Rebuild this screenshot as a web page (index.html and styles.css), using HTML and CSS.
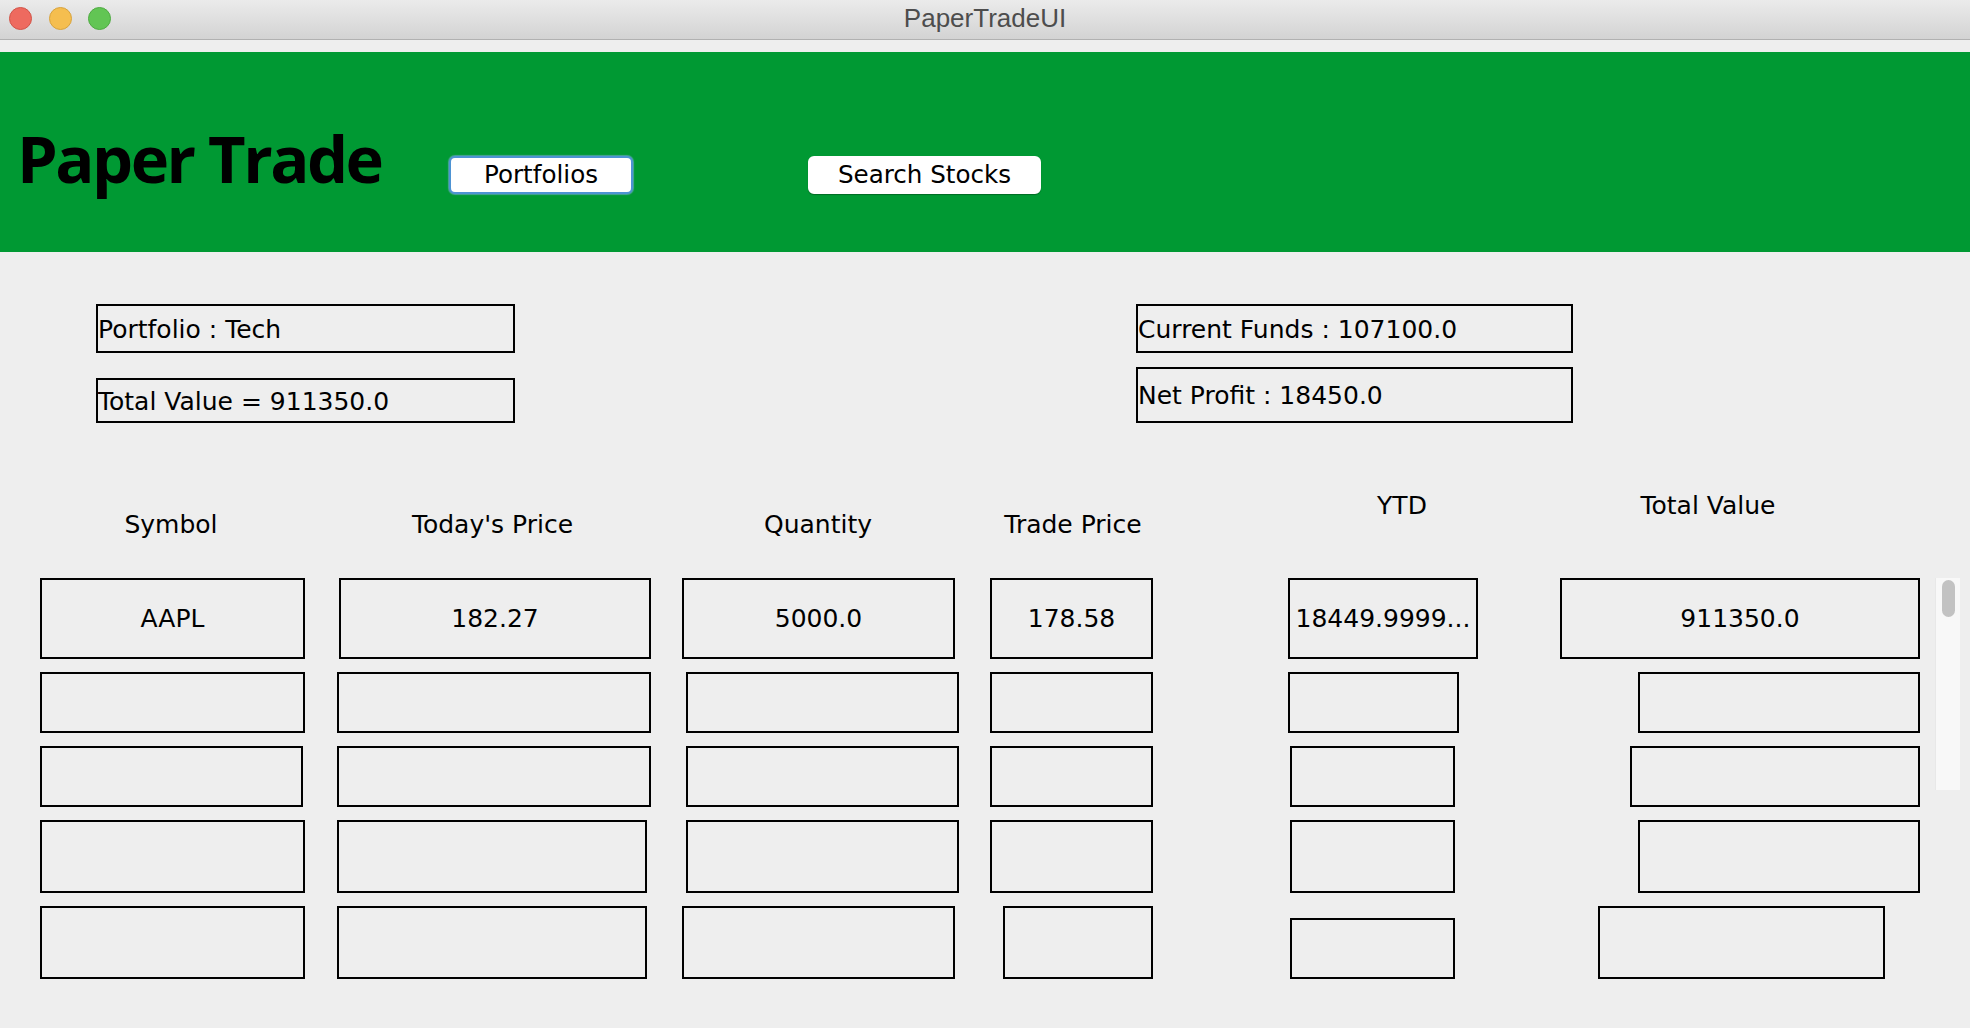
FILE: index.html
```html
<!DOCTYPE html>
<html lang="en">
<head>
<meta charset="utf-8">
<title>PaperTradeUI</title>
<link rel="stylesheet" href="styles.css">
</head>
<body>
<div class="window">
  <div class="titlebar">
    <div class="lights">
      <span class="light red"></span>
      <span class="light yellow"></span>
      <span class="light green"></span>
    </div>
    <div class="wintitle">PaperTradeUI</div>
    <div></div>
  </div>
  <main class="app">
    <header class="banner">
      <h1 class="brand">Paper Trade</h1>
      <button class="btn btn-focus">Portfolios</button>
      <button class="btn btn-search">Search Stocks</button>
    </header>

    <section class="summary">
      <div class="summary-col left">
        <div class="field f-49">Portfolio : Tech</div>
        <div class="field f-45">Total Value = 911350.0</div>
      </div>
      <div class="summary-col right">
        <div class="field f-49">Current Funds : 107100.0</div>
        <div class="field f-56">Net Profit : 18450.0</div>
      </div>
    </section>

    <section class="holdings">
      <div class="row heads">
        <div class="lab c1 l1">Symbol</div>
        <div class="lab c2 l2">Today's Price</div>
        <div class="lab c3 l3">Quantity</div>
        <div class="lab c4 l4">Trade Price</div>
        <div class="lab c5 l5 high">YTD</div>
        <div class="lab c6 l6 high">Total Value</div>
      </div>
      <div class="row r1">
        <div class="cell c1">AAPL</div>
        <div class="cell c2">182.27</div>
        <div class="cell c3">5000.0</div>
        <div class="cell c4">178.58</div>
        <div class="cell c5">18449.9999...</div>
        <div class="cell c6">911350.0</div>
      </div>
      <div class="row r2">
        <div class="cell c1"></div>
        <div class="cell c2"></div>
        <div class="cell c3"></div>
        <div class="cell c4"></div>
        <div class="cell c5"></div>
        <div class="cell c6"></div>
      </div>
      <div class="row r3">
        <div class="cell c1"></div>
        <div class="cell c2"></div>
        <div class="cell c3"></div>
        <div class="cell c4"></div>
        <div class="cell c5"></div>
        <div class="cell c6"></div>
      </div>
      <div class="row r4">
        <div class="cell c1"></div>
        <div class="cell c2"></div>
        <div class="cell c3"></div>
        <div class="cell c4"></div>
        <div class="cell c5"></div>
        <div class="cell c6"></div>
      </div>
      <div class="row r5">
        <div class="cell c1"></div>
        <div class="cell c2"></div>
        <div class="cell c3"></div>
        <div class="cell c4"></div>
        <div class="cell c5"></div>
        <div class="cell c6"></div>
      </div>
      <div class="scroll"><div class="thumb"></div></div>
    </section>
  </main>
</div>
</body>
</html>
```

FILE: styles.css
```css
html, body {
  margin: 0;
  padding: 0;
  background: #eeeeee;
}

body {
  font-family: "DejaVu Sans", "Liberation Sans", sans-serif;
  color: #000;
  width: 1970px;
  height: 1028px;
  overflow: hidden;
}

/* ---------- window title bar ---------- */
.titlebar {
  height: 39px;
  border-bottom: 1px solid #b1b1b1;
  background: linear-gradient(#ebebeb, #d3d3d3);
  display: grid;
  grid-template-columns: 1fr auto 1fr;
  align-items: center;
}

.lights {
  display: flex;
  gap: 16.5px;
  padding-left: 9px;
  padding-bottom: 3px;
}

.light {
  width: 21px;
  height: 21px;
  border-radius: 50%;
  border: 1px solid rgba(0, 0, 0, 0.15);
}
.light.red { background: #ee6a5f; border-color: #d25448; }
.light.yellow { background: #f5be4f; border-color: #d8a33d; }
.light.green { background: #62c554; border-color: #4fab42; }

.wintitle {
  font-family: "Liberation Sans", Arial, sans-serif;
  font-size: 26px;
  color: #4d4d4d;
  padding-bottom: 2px;
}

/* ---------- app ---------- */
.app {
  padding-top: 12px;
}

.banner {
  height: 200px;
  background: #009933;
  display: flex;
  align-items: flex-start;
  padding-left: 17px;
}

.brand {
  margin: 74px 0 0;
  width: 432px;
  flex: none;
  font-family: "Open Sans", sans-serif;
  font-weight: 700;
  font-size: 65px;
  line-height: 65px;
  letter-spacing: -2.5px;
  color: #000;
}

.btn {
  margin-top: 104px;
  height: 38px;
  box-sizing: border-box;
  flex: none;
  background: #fff;
  border: 2px solid #fff;
  border-radius: 6px;
  font-family: "DejaVu Sans", sans-serif;
  font-size: 24.6px;
  line-height: 32px;
  color: #000;
  padding: 0;
  text-align: center;
}

.btn-focus {
  width: 184px;
  border-color: #4d93d3;
  box-shadow: 0 0 1px 1px rgba(120, 170, 220, 0.6);
}

.btn-search {
  width: 233px;
  margin-left: 175px;
  box-shadow: 0 1px 1px rgba(0, 0, 0, 0.3);
}

/* ---------- summary fields ---------- */
.summary {
  display: flex;
  padding: 52px 0 0 96px;
}

.summary-col {
  display: flex;
  flex-direction: column;
}

.summary-col.left {
  width: 419px;
  gap: 25px;
}

.summary-col.right {
  width: 437px;
  margin-left: 621px;
  gap: 14px;
}

.field {
  box-sizing: border-box;
  border: 2px solid #000;
  font-size: 25px;
  display: flex;
  align-items: center;
  padding-left: 0;
  padding-top: 1px;
  white-space: nowrap;
}

.f-49 { height: 49px; }
.f-45 { height: 45px; }
.f-56 { height: 56px; }

/* ---------- holdings grid ---------- */
.holdings {
  margin-top: 64px;
  margin-left: 40px;
  width: 1920px;
  display: grid;
  grid-template-columns: 296px 346px 308px 298px 272px 360px 15px 25px;
  grid-template-rows: 78px 81px 61px 61px 73px 73px;
  row-gap: 13px;
}

.row {
  display: contents;
}

.heads > * { grid-row: 1; }
.r1 > * { grid-row: 2; }
.r2 > * { grid-row: 3; }
.r3 > * { grid-row: 4; }
.r4 > * { grid-row: 5; }
.r5 > * { grid-row: 6; }

.c1 { grid-column: 1; }
.c2 { grid-column: 2; }
.c3 { grid-column: 3; }
.c4 { grid-column: 4; }
.c5 { grid-column: 5; }
.c6 { grid-column: 6; }

.lab {
  font-size: 25px;
  line-height: 30px;
  text-align: center;
  margin-top: 23px;
  align-self: start;
  white-space: nowrap;
}
.lab.high { margin-top: 4px; }

.cell {
  box-sizing: border-box;
  border: 2px solid #000;
  font-size: 25px;
  display: flex;
  align-items: center;
  justify-content: center;
  white-space: nowrap;
  overflow: hidden;
}

.cell.c1 { width: 265px; }
.cell.c2 { width: 314px; margin-left: 1px; }
.cell.c3 { width: 273px; margin-left: 4px; }
.cell.c4 { width: 163px; }
.cell.c5 { width: 165px; margin-left: 2px; }
.cell.c6 { width: 282px; margin-left: 78px; }

.lab.l1 { width: 262px; }
.lab.l2 { width: 313px; }
.lab.l3 { width: 272px; }
.lab.l4 { width: 166px; }
.lab.l5 { width: 228px; }
.lab.l6 { width: 296px; }

.r1 .c2 { width: 312px; margin-left: 3px; }
.r1 .c3 { margin-left: 0; }
.r1 .c5 { width: 190px; margin-left: 0; }
.r1 .c6 { width: 360px; margin-left: 0; }

.r2 .c5 { width: 171px; margin-left: 0; }

.r3 .c1 { width: 263px; }
.r3 .c6 { width: 290px; margin-left: 70px; }

.r4 .c2 { width: 310px; }

.r5 .c2 { width: 310px; }
.r5 .c3 { margin-left: 0; }
.r5 .c4 { width: 150px; margin-left: 13px; }
.r5 .c5 { height: 61px; align-self: end; }
.r5 .c6 { width: 287px; margin-left: 38px; }

.scroll {
  grid-column: 8;
  grid-row: 2 / 5;
  align-self: start;
  height: 212px;
  background: #f8f8f8;
  border-left: 1px solid #e8e8e8;
  box-sizing: border-box;
  display: flex;
  justify-content: center;
  padding-top: 2px;
}

.thumb {
  width: 13px;
  height: 37px;
  border-radius: 7px;
  background: #c2c2c2;
}
```
